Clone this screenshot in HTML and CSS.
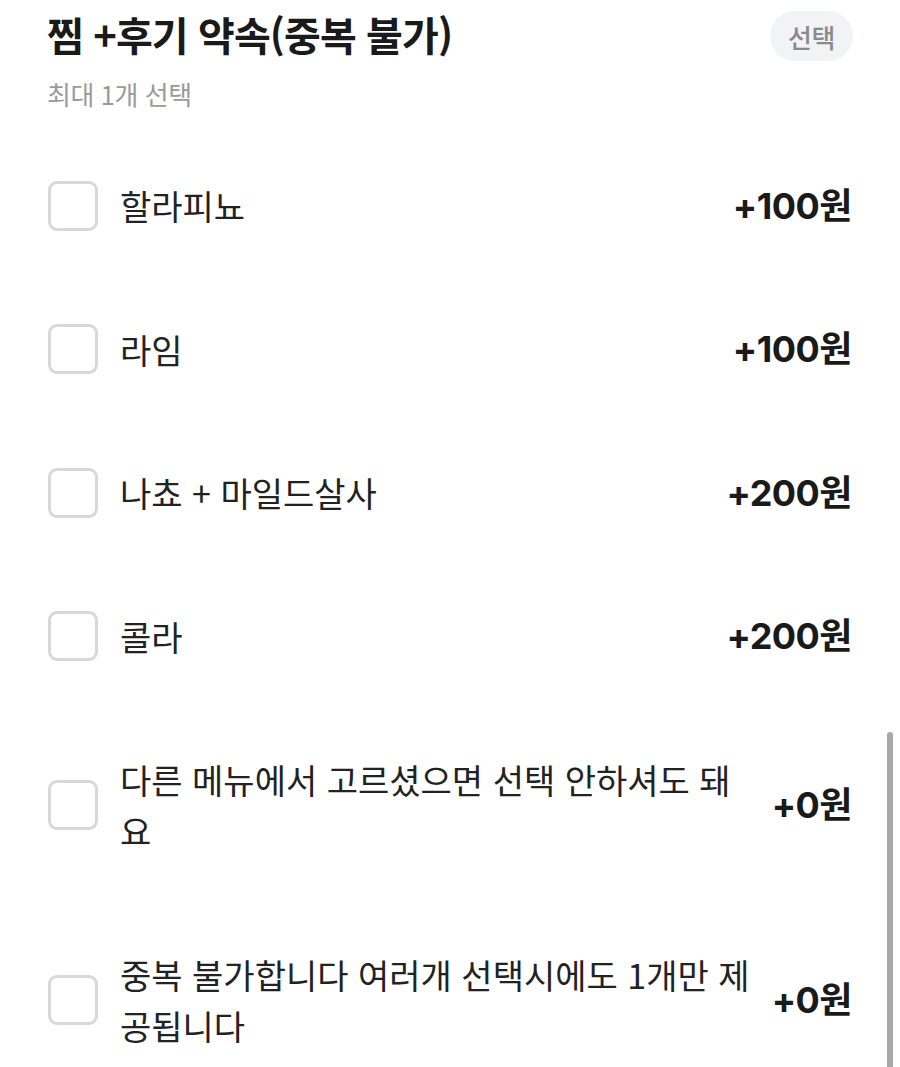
FILE: index.html
```html
<!DOCTYPE html>
<html lang="ko">
<head>
    <meta charset="UTF-8">
    <meta name="viewport" content="width=device-width, initial-scale=1.0">
    <title>옵션 선택</title>
    <link rel="stylesheet" href="styles.css">
</head>
<body>

    <div class="option-group">

        <div class="group-header">
            <div class="group-title-row">
                <h2 class="group-title">찜 +후기 약속(중복 불가)</h2>
                <span class="badge">선택</span>
            </div>
            <div class="group-sub">최대 1개 선택</div>
        </div>

        <ul class="option-list">
            <li class="option-row">
                <span class="check"></span>
                <span class="option-name">할라피뇨</span>
                <span class="option-price">+100원</span>
            </li>
            <li class="option-row">
                <span class="check"></span>
                <span class="option-name">라임</span>
                <span class="option-price">+100원</span>
            </li>
            <li class="option-row">
                <span class="check"></span>
                <span class="option-name">나쵸 + 마일드살사</span>
                <span class="option-price">+200원</span>
            </li>
            <li class="option-row">
                <span class="check"></span>
                <span class="option-name">콜라</span>
                <span class="option-price">+200원</span>
            </li>
            <li class="option-row">
                <span class="check"></span>
                <span class="option-name">다른 메뉴에서 고르셨으면 선택 안하셔도 돼요</span>
                <span class="option-price">+0원</span>
            </li>
            <li class="option-row">
                <span class="check"></span>
                <span class="option-name">중복 불가합니다 여러개 선택시에도 1개만 제공됩니다</span>
                <span class="option-price">+0원</span>
            </li>
        </ul>

    </div>

    <div class="scroll-thumb"></div>

</body>
</html>
```

FILE: styles.css
```css
body {
    margin: 0;
    background-color: #ffffff;
    font-family: "Noto Sans CJK KR", "Noto Sans", sans-serif;
    color: #1f1f1f;
    overflow: hidden;
}

.option-group {
    padding: 7px 48px 0 47px;
}

.group-title-row {
    display: flex;
    justify-content: space-between;
    align-items: center;
}

.group-title {
    margin: 0;
    font-size: 40px;
    font-weight: 700;
    line-height: 54px;
    letter-spacing: -0.9px;
    color: #1a1a1a;
}

.badge {
    display: flex;
    align-items: center;
    justify-content: center;
    width: 83px;
    height: 50px;
    border-radius: 25px;
    background-color: #f2f3f5;
    color: #8a8a8a;
    font-size: 26px;
    font-weight: 500;
    letter-spacing: -0.5px;
    margin-top: 4px;
    margin-right: -1px;
}

.group-sub {
    margin-top: 18px;
    font-size: 26px;
    line-height: 30px;
    color: #9a9a9a;
    letter-spacing: -0.5px;
}

.option-list {
    list-style: none;
    margin: 25px 0 0 0;
    padding: 0;
}

.option-row {
    display: flex;
    align-items: center;
    padding: 46px 0 46.5px 0;
}

.check {
    flex-shrink: 0;
    width: 50px;
    height: 50px;
    box-sizing: border-box;
    border: 3px solid #d8d8d8;
    border-radius: 9px;
    margin: 0 22px 0 1px;
}

.option-name {
    flex-grow: 1;
    font-size: 34px;
    line-height: 51px;
    color: #222222;
    padding-right: 12px;
}

.option-price {
    flex-shrink: 0;
    font-family: Inter, "Noto Sans CJK KR", sans-serif;
    font-size: 36px;
    font-weight: 700;
    line-height: 50px;
    letter-spacing: -0.5px;
    color: #1a1a1a;
}

.scroll-thumb {
    position: fixed;
    top: 732px;
    right: 7px;
    width: 6px;
    height: 400px;
    border-radius: 3px;
    background-color: #a8a8a8;
}
```
